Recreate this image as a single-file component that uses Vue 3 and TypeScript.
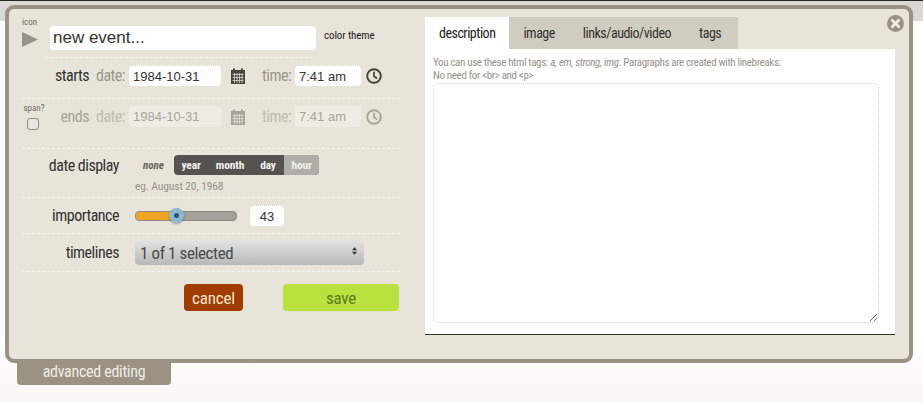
<script setup lang="ts">
const tabs = ['description', 'image', 'links/audio/video', 'tags']
const scales = ['year', 'month', 'day']
</script>

<template>
  <div class="page">
    <div class="modal">
      <div class="left">
        <div class="title-row">
          <div class="icon-pick">
            <span class="tiny">icon</span>
            <svg class="tri" width="16" height="15" viewBox="0 0 16 15"><path d="M0 0 L16 7.500 L0 15 Z" fill="#999488" /></svg>
          </div>
          <input class="inp title" value="new event..." />
          <span class="theme">color theme</span>
        </div>
        <div class="row when starts">
          <span class="lab">starts</span>
          <span class="sub">date:</span>
          <input class="inp date" value="1984-10-31" />
          <svg class="cal" width="16" height="16" viewBox="0 0 16 16">
            <path d="M1 2h2V0.500h2V2h6V0.500h2V2h2v14H1Z" fill="#4b4740" />
            <path d="M2.500 6.500h11M2.500 9.500h11M2.500 12.500h11M4.500 5v10M7 5v10M9.500 5v10M12 5v10" stroke="#e8e4da" stroke-width=".7" fill="none" />
          </svg>
          <span class="sub time">time:</span>
          <input class="inp clock-in" value="7:41 am" />
          <svg class="clock" width="16" height="16" viewBox="0 0 16 16">
            <circle cx="8" cy="8" r="6.800" fill="none" stroke="#45413a" stroke-width="1.900" />
            <path d="M8 3.800V8.300L11 10.500" fill="none" stroke="#45413a" stroke-width="1.700" />
          </svg>
        </div>
        <div class="row when ends">
          <div class="span-box">
            <span class="tiny">span?</span>
            <input class="check" type="checkbox" />
          </div>
          <div class="dim">
            <span class="lab">ends</span>
            <span class="sub">date:</span>
            <input class="inp date off" value="1984-10-31" disabled />
            <svg class="cal" width="16" height="16" viewBox="0 0 16 16">
              <path d="M1 2h2V0.500h2V2h6V0.500h2V2h2v14H1Z" fill="#a9a498" />
              <path d="M2.500 6.500h11M2.500 9.500h11M2.500 12.500h11M4.500 5v10M7 5v10M9.500 5v10M12 5v10" stroke="#e8e4da" stroke-width=".7" fill="none" />
            </svg>
            <span class="sub time">time:</span>
            <input class="inp clock-in off" value="7:41 am" disabled />
            <svg class="clock" width="16" height="16" viewBox="0 0 16 16">
              <circle cx="8" cy="8" r="6.800" fill="none" stroke="#a9a498" stroke-width="1.900" />
              <path d="M8 3.800V8.300L11 10.500" fill="none" stroke="#a9a498" stroke-width="1.700" />
            </svg>
          </div>
        </div>
        <div class="row display">
          <span class="name">date display</span>
          <div class="disp-main">
            <div class="seg-line">
              <em class="none">none</em>
              <div class="seg">
                <span v-for="s in scales" :key="s" class="seg-item">{{ s }}</span>
                <span class="seg-item hour">hour</span>
              </div>
            </div>
            <div class="eg">eg. August 20, 1968</div>
          </div>
        </div>
        <div class="row imp">
          <span class="name">importance</span>
          <div class="slider">
            <div class="fill"></div>
            <div class="handle"><i></i></div>
          </div>
          <input class="inp num" value="43" />
        </div>
        <div class="row lines">
          <span class="name">timelines</span>
          <div class="sel-wrap">
            <select class="sel"><option>1 of 1 selected</option></select>
            <svg class="arrows" width="5" height="8" viewBox="0 0 6 9"><path d="M3 0 6 3.500H0ZM3 9 0 5.500H6Z" fill="#333" /></svg>
          </div>
        </div>
        <div class="actions">
          <button class="btn cancel">cancel</button>
          <button class="btn save">save</button>
        </div>
      </div>
      <div class="right">
        <div class="tabs">
          <span v-for="(t, i) in tabs" :key="t" class="tab" :class="{ active: i === 0 }">{{ t }}</span>
        </div>
        <div class="panel">
          <p class="help">You can use these html tags: <em>a, em, strong, img</em>. Paragraphs are created with linebreaks:<br />No need for &lt;br&gt; and &lt;p&gt;</p>
          <textarea class="area"></textarea>
        </div>
      </div>
      <svg class="close" width="17" height="17" viewBox="0 0 18 18">
        <circle cx="9" cy="9" r="9" fill="#9b9283" />
        <path d="M5.500 5.500 12.500 12.500M12.500 5.500 5.500 12.500" stroke="#f2efe8" stroke-width="2.800" stroke-linecap="round" />
      </svg>
    </div>
    <div class="adv">advanced editing</div>
  </div>
</template>

<style>
html, body { margin: 0; padding: 0; }
</style>

<style scoped>
.page {
  width: 923px;
  height: 402px;
  box-sizing: border-box;
  padding: 4px 0 0 5px;
  overflow: hidden;
  background: linear-gradient(#dbd9d4 0, #dbd9d4 20px, #fff 20px, #fff 340px, #fcfbf9 362px, #f9f7f4 402px);
  border-top: 1px solid #26262a;
  font-family: "Roboto Condensed", "Roboto", sans-serif;
}
.modal {
  position: relative;
  width: 908px;
  height: 358px;
  box-sizing: border-box;
  border: 4px solid #9b9283;
  border-radius: 9px;
  background: #e8e4da;
  display: flex;
}
.left { width: 416px; padding-left: 13px; box-sizing: border-box; }
.tiny { font-size: 9px; color: #6f6a60; line-height: 10px; display: block; }
.title-row { height: 49px; display: flex; align-items: flex-end; width: 378px; box-sizing: border-box; padding-bottom: 8px; position: relative; }
.title-row::after { content: ""; position: absolute; left: 23px; width: 268px; bottom: 0; border-bottom: 1px dashed #f5f3ed; }
.icon-pick { width: 28px; margin-bottom: 3px; }
.icon-pick .tiny { margin-bottom: 5px; }
.tri { display: block; }
.inp {
  border: 0;
  border-radius: 4px;
  background: #fff;
  box-sizing: border-box;
  font-family: "Liberation Sans", sans-serif;
  color: #333;
  padding: 0 4px;
  outline: 0;
}
.title { width: 266px; height: 24px; font-size: 17px; padding-left: 3px; }
.theme { font-size: 11px; color: #222; margin: 0 0 8px 8px; letter-spacing: -.1px; }
.row { display: flex; align-items: center; border-bottom: 1px dashed #f5f3ed; width: 378px; box-sizing: border-box; }
.starts { height: 41px; padding-bottom: 5px; }
.ends { height: 50px; padding-bottom: 14px; }
.lab { width: 67px; text-align: right; font-size: 16px; letter-spacing: -.5px; color: #333; flex: none; }
.dim { display: flex; align-items: center; }
.dim .lab { width: 40px; color: #a9a498; }
.span-box { width: 27px; flex: none; }
.span-box .tiny { margin-bottom: 5px; width: 24px; text-align: center; }
.check {
  appearance: none;
  display: block;
  width: 12px;
  height: 12px;
  margin: 0 0 0 5px;
  border: 1px solid #8e8a80;
  border-radius: 3px;
  background: #e8e6e0;
}
.sub { font-size: 16px; letter-spacing: -.5px; color: #9b968a; margin-left: 7px; width: 33px; flex: none; }
.dim .sub { color: #c0bbb0; }
.date, .clock-in, .num { height: 21px; font-size: 13px; border-top: 1px dotted #d3cfc5; }
.off { border-top: 0; }
.date { width: 92px; }
.clock-in { width: 66px; }
.off { background: #efece5; color: #a9a498; }
.cal { margin-left: 9px; flex: none; }
.time { margin-left: 16px; }
.clock { margin-left: 5px; flex: none; }
.name { width: 97px; text-align: right; font-size: 16px; letter-spacing: -.5px; color: #333; flex: none; }
.display { height: 49px; align-items: flex-start; padding-top: 6px; }
.disp-main { margin-left: 16px; }
.display .name { margin-top: 1px; }
.seg-line { display: flex; align-items: center; height: 20px; }
.none { font-size: 11px; font-weight: 700; color: #6b665c; width: 39px; padding-left: 8px; box-sizing: border-box; }
.seg { display: flex; height: 20px; border-radius: 4px; overflow: hidden; background: #555350; font-size: 11.500px; font-weight: 700; letter-spacing: -.15px; color: #f2f0ea; width: 145px; }
.seg-item { display: flex; align-items: center; justify-content: center; }
.seg-item:nth-child(1) { width: 34px; }
.seg-item:nth-child(2) { width: 44px; }
.seg-item:nth-child(3) { width: 32px; }
.hour { background: #b0aea8; width: 35px; }
.eg { font-size: 11.500px; color: #97928a; margin-top: 4px; letter-spacing: -.1px; }
.imp { height: 36px; }
.slider { position: relative; margin-left: 16px; width: 102px; height: 10px; box-sizing: border-box; border-radius: 4px; background: #a4a19b; border: 1px solid #8f8c85; }
.fill { width: 39px; height: 100%; border-radius: 3px 0 0 3px; background: #f0a526; }
.handle {
  position: absolute;
  left: 33px;
  top: -4px;
  width: 15px;
  height: 15px;
  border-radius: 50%;
  background: #8fb8cf;
  box-shadow: 0 1px 2px #0005;
  display: flex;
  align-items: center;
  justify-content: center;
}
.handle i { width: 5px; height: 5px; border-radius: 50%; background: #2a5672; }
.num { width: 34px; margin-left: 13px; text-align: center; }
.lines { height: 38px; }
.sel-wrap { position: relative; margin-left: 16px; width: 229px; height: 25px; }
.sel {
  appearance: none;
  width: 100%;
  height: 100%;
  border: 0;
  border-radius: 4px;
  background: linear-gradient(#e3e3e1, #b7b8b8);
  font-family: inherit;
  font-size: 17px;
  letter-spacing: -.4px;
  color: #4a4a4a;
  padding: 0 0 0 5px;
}
.arrows { position: absolute; right: 7px; top: 7px; }
.actions { display: flex; margin-left: 162px; margin-top: 12px; gap: 40px; }
.btn { border: 0; border-radius: 4px; height: 27px; font-family: inherit; font-size: 17px; letter-spacing: -.2px; padding: 0; }
.cancel { width: 59px; background: #a03c00; color: #f5e6cf; }
.save { width: 116px; background: #b9e23f; color: #5e7a20; }
.right { padding-top: 8px; width: 470px; }
.tabs { display: flex; height: 32px; background: #d0ccc0; width: 313px; }
.tab { font-size: 14px; letter-spacing: -.5px; color: #333; padding: 0 14px; display: flex; align-items: center; }
.tab.active { background: #fff; color: #222; }
.panel { background: #fff; height: 286px; box-sizing: border-box; padding: 7px 16px 0 8px; border-bottom: 1px solid #33332e; }
.help { margin: 0; font-size: 11px; letter-spacing: -.35px; line-height: 13px; color: #97928a; height: 27px; }
.area {
  display: block;
  width: 446px;
  height: 240px;
  box-sizing: border-box;
  border: 1px dotted #d5d3cd;
  border-radius: 4px;
  background: #fff;
  outline: 0;
  margin: 0;
}
.close { position: absolute; right: 5px; top: 6px; }
.adv {
  width: 154px;
  height: 22px;
  margin-left: 12px;
  padding-bottom: 6px;
  box-sizing: border-box;
  background: #9b9283;
  border-radius: 0 0 4px 4px;
  color: #f0ece3;
  font-size: 16px;
  letter-spacing: -.3px;
  display: flex;
  align-items: center;
  justify-content: center;
}
</style>
